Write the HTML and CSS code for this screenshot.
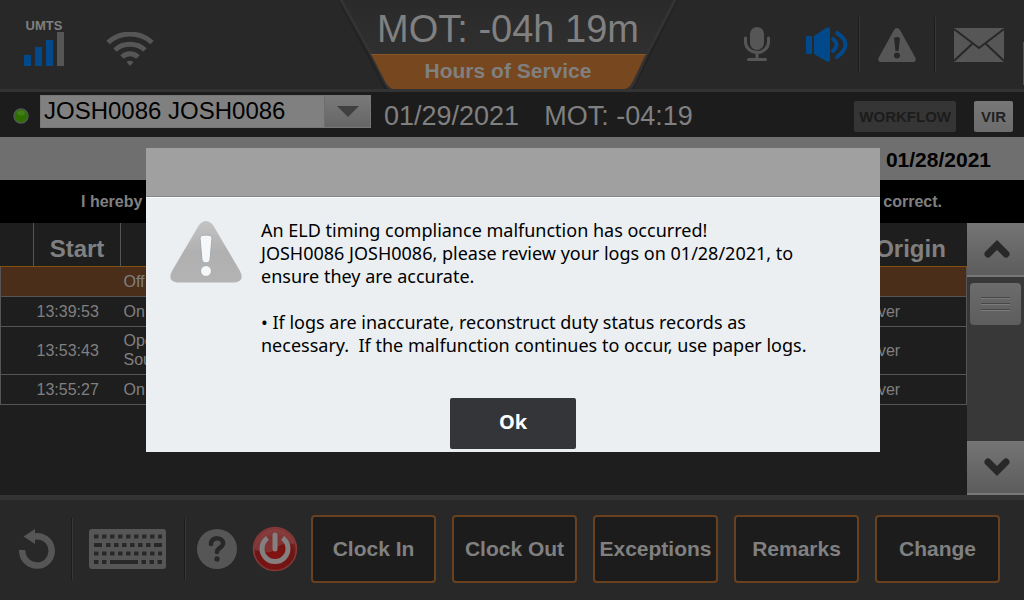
FILE: index.html
```html
<!DOCTYPE html>
<html lang="en">
<head>
<meta charset="utf-8">
<meta name="viewport" content="width=device-width, initial-scale=1">
<title>Hours of Service</title>
<link rel="stylesheet" href="styles.css">
</head>
<body>
<header class="topbar">
  <div class="status">
    <div class="signal">
      <span class="signal-label">UMTS</span>
      <svg width="40" height="34" viewBox="0 0 40 34" aria-hidden="true"><path fill="#01498a" d="M0 23h7v11H0zM11 15h7v19h-7zM22 8h7v26h-7z"/><path fill="#565656" d="M33 0h7v34h-7z"/></svg>
    </div>
    <svg class="wifi" width="48" height="34" viewBox="0 0 48 34" aria-hidden="true"><g fill="none" stroke="#565656" stroke-width="5"><path d="M2 10.500C14-.7 34-.7 46 10.500"/><path d="M9 18C17 10.300 31 10.300 39 18"/><path d="M16 25c4.500-4.500 11.500-4.500 16 0"/></g><path fill="#565656" d="M20.500 30q3.500-2.600 7 0L24 34z"/></svg>
  </div>
  <div class="clock">
    <svg class="clock-shape" width="340" height="90" viewBox="0 0 340 90" aria-hidden="true">
      <defs><linearGradient id="tab" x1="0" y1="0" x2="0" y2="1"><stop offset="0" stop-color="#2a2a2a"/><stop offset="1" stop-color="#333"/></linearGradient></defs>
      <path fill="#232323" d="M0 0h340l-44 89H46z"/>
      <path fill="url(#tab)" stroke="#333" stroke-width="3" d="M2-2 33 54 47 82Q50 89 56 89H288Q293 89 296 82L309 54 338-2z"/>
      <path fill="#77471f" d="M33 54H308L295 81Q291 89 286 89H56Q52 89 48 83z"/>
      <path fill="#8a5526" d="M33 54H308v1H33z"/>
    </svg>
    <div class="clock-time">MOT: -04h 19m</div>
    <div class="clock-name">Hours of Service</div>
  </div>
  <div class="tools">
    <button class="icon mic" aria-label="Microphone"><svg width="26" height="35" viewBox="0 0 26 35"><rect x="6" y="0" width="14" height="23" rx="7" fill="#565656"/><path d="M1.500 11v4a11.500 10.500 0 0 0 23 0v-4M13 25v7M4.500 32.500h17" fill="none" stroke="#565656" stroke-width="3" stroke-linecap="round"/></svg></button>
    <button class="icon" aria-label="Volume"><svg width="42" height="35" viewBox="0 0 42 35"><path fill="#01498a" d="M1 9h5v18H1Q0 27 0 26V10Q0 9 1 9zM8 9 20 1q4-2 4 1v31q0 3-4 1L8 27z"/><path d="M27 12q7 5.500 0 12M31 6q17 11 0 24" fill="none" stroke="#01498a" stroke-width="4" stroke-linecap="round"/></svg></button>
    <span class="rule"></span>
    <button class="icon alert" aria-label="Alerts"><svg width="38" height="34" viewBox="0 0 38 34"><path fill="#565656" d="M16 2q3-4 6 0l15.500 28q1 4-3 4h-31q-4 0-3-4z"/><path fill="#282828" d="M16 10q3-2 6 0l-1.500 13h-3z"/><circle cx="19" cy="27.500" r="3" fill="#282828"/></svg></button>
    <span class="rule"></span>
    <button class="icon mail" aria-label="Messages"><svg width="50" height="34" viewBox="0 0 50 34"><path fill="#565656" d="M0 0h50v34H0z"/><path d="M0 1 25 20 50 1M0 33 18 16M50 33 32 16" fill="none" stroke="#282828" stroke-width="2"/></svg></button>
  </div>
  <span class="edge-mark"></span>
</header>

<section class="driverbar">
  <svg class="led" width="16" height="16" viewBox="0 0 16 16" aria-hidden="true"><circle cx="8" cy="8" r="7" fill="#2f6f02" stroke="#505a4b" stroke-width="1.500"/><ellipse cx="8" cy="5" rx="4" ry="2.500" fill="#427d19"/></svg>
  <div class="picker">
    <select class="driver" aria-label="Driver"><option>JOSH0086 JOSH0086</option></select>
    <span class="picker-arrow"><svg width="22" height="12" viewBox="0 0 22 12"><path fill="#404040" d="M0 0h22L11 11z"/></svg></span>
  </div>
  <span class="bar-date">01/29/2021</span>
  <span class="bar-mot">MOT: -04:19</span>
  <div class="bar-actions">
    <button class="small-btn off" disabled>WORKFLOW</button>
    <button class="small-btn">VIR</button>
  </div>
</section>

<div class="log-date">01/28/2021</div>
<div class="certify"><span>I hereby certify that my data</span><span>true and correct.</span></div>

<main class="content">
  <div class="log">
    <table class="grid">
      <colgroup><col class="c-mark"><col class="c-start"><col><col class="c-origin"></colgroup>
      <thead><tr><th></th><th>Start</th><th></th><th>Origin</th></tr></thead>
      <tbody>
        <tr class="current"><td></td><td></td><td>Off Duty</td><td></td></tr>
        <tr><td></td><td>13:39:53</td><td>On Duty</td><td>Driver</td></tr>
        <tr><td></td><td>13:53:43</td><td>Operator<br>Source</td><td>Driver</td></tr>
        <tr><td></td><td>13:55:27</td><td>On Duty</td><td>Driver</td></tr>
      </tbody>
    </table>
  </div>
  <div class="scroller">
    <button class="scroll-btn" aria-label="Scroll up"><svg width="26" height="18" viewBox="0 0 26 18"><path d="M4 14 13 5l9 9" fill="none" stroke="#282828" stroke-width="7" stroke-linecap="round"/></svg></button>
    <div class="track"><div class="thumb"><i></i><i></i><i></i></div></div>
    <button class="scroll-btn" aria-label="Scroll down"><svg width="26" height="18" viewBox="0 0 26 18"><path d="M4 4l9 9 9-9" fill="none" stroke="#282828" stroke-width="7" stroke-linecap="round"/></svg></button>
  </div>
</main>

<footer class="footer">
  <div class="foot-tools">
    <button class="icon undo" aria-label="Back"><svg width="36" height="40" viewBox="0 0 36 40"><path d="M3.300 21A14.700 14.700 0 1 0 15 7.500" fill="none" stroke="#565656" stroke-width="6.500"/><path fill="#565656" d="M4.500 7.500 16 0v15z"/></svg></button>
    <span class="rule tall"></span>
    <button class="icon keys" aria-label="Keyboard"><svg width="77" height="40" viewBox="0 0 77 40"><rect width="77" height="40" rx="3" fill="#565656"/><g stroke="#282828" stroke-width="4" fill="none"><path d="M5 7.500h68M5 24.500h68" stroke-dasharray="4.500 3.500"/><path d="M5 16h8M17 16h4.500M25 16h4.500M33 16h4.500M41 16h4.500M49 16h4.500M57 16h4.500M65 16h8M5 33h4.500M13 33h4.500M21 33h28M52.500 33h4.500M60.500 33H65M68.500 33H73"/></g></svg></button>
    <span class="rule tall"></span>
    <button class="icon help" aria-label="Help"><svg width="40" height="40" viewBox="0 0 40 40"><circle cx="20" cy="20" r="20" fill="#565656"/><path d="M14 15c0-8 13-7 12 0-.5 4-6 4-6 8" fill="none" stroke="#282828" stroke-width="4.500" stroke-linecap="round"/><circle cx="20" cy="30" r="2.700" fill="#282828"/></svg></button>
    <button class="icon power" aria-label="Power"><svg width="46" height="46" viewBox="0 0 46 46"><defs><radialGradient id="red" cx=".5" cy=".65" r=".6"><stop offset="0" stop-color="#871212"/><stop offset=".7" stop-color="#6d1515"/><stop offset="1" stop-color="#823434"/></radialGradient></defs><circle cx="23" cy="23" r="21.500" fill="url(#red)" stroke="#843838" stroke-width="1.500"/><path fill="#8a4747" opacity=".6" d="M2 23A21 21 0 0 1 43 18Q30 16 23 23T2 23z"/><path d="M15.500 12a13 13 0 1 0 15 0" fill="none" stroke="#858080" stroke-width="5"/><path d="M23 9v14" stroke="#858080" stroke-width="5" stroke-linecap="round"/></svg></button>
  </div>
  <nav class="actions">
    <button class="action">Clock In</button>
    <button class="action">Clock Out</button>
    <button class="action">Exceptions</button>
    <button class="action">Remarks</button>
    <button class="action">Change</button>
  </nav>
</footer>

<div class="overlay">
  <div class="modal" role="alertdialog" aria-modal="true" aria-describedby="message">
    <div class="modal-head"></div>
    <div class="modal-body">
      <svg class="modal-icon" width="72" height="62" viewBox="0 0 72 62" aria-hidden="true"><defs><linearGradient id="warn" x1="0" y1="0" x2="0" y2="1"><stop offset="0" stop-color="#c4c4c4"/><stop offset=".5" stop-color="#b0b0b0"/><stop offset="1" stop-color="#b3b3b3"/></linearGradient></defs><path fill="url(#warn)" d="M29 4q7-8 14 0l27 46q5 10-5 11.500H7Q-3 60 2 50z"/><path fill="#f6f7f8" stroke="#a4aaae" d="M30 17q0-3 6-3t6 3l-2 22q-.5 3-4 3t-4-3z"/><circle cx="36" cy="50" r="5.500" fill="#f6f7f8" stroke="#a4aaae"/></svg>
      <div class="message" id="message">
        <p>An ELD timing compliance malfunction has occurred!<br>JOSH0086 JOSH0086, please review your logs on 01/28/2021, to<br>ensure they are accurate.</p>
        <p>• If logs are inaccurate, reconstruct duty status records as<br>necessary.&nbsp; If the malfunction continues to occur, use paper logs.</p>
      </div>
    </div>
    <button class="ok">Ok</button>
  </div>
</div>
</body>
</html>
```
FILE: styles.css
```css
* { box-sizing: border-box; }
body {
  margin: 0;
  min-height: 100vh;
  display: flex;
  flex-direction: column;
  background: #1e1e1e;
  color: #808080;
  font-family: "Liberation Sans", Arial, sans-serif;
}
button { font-family: inherit; margin: 0; }
svg { display: block; }
.icon { padding: 0; border: 0; background: none; }

.topbar {
  position: relative;
  display: grid;
  grid-template-columns: 1fr 340px 1fr;
  height: 92px;
  padding-right: 8px;
  background: #282828;
  border-bottom: 3px solid #333;
}
.status { display: flex; align-items: flex-start; gap: 42px; padding: 20px 0 0 24px; }
.signal-label { display: block; height: 12px; font-size: 13px; line-height: 12px; font-weight: bold; text-align: center; }
.wifi { margin-top: 12px; }
.clock { position: relative; text-align: center; white-space: nowrap; }
.clock-shape { position: absolute; left: 0; top: 0; }
.clock-time { position: relative; font-size: 38px; line-height: 54px; padding-top: 2px; }
.clock-name { position: relative; font-size: 21px; line-height: 30px; font-weight: bold; }
.tools { display: flex; justify-content: flex-end; align-items: center; gap: 18px; padding-right: 12px; }
.mic { margin-right: 18px; }
.rule { width: 2px; height: 55px; background: #1c1c1c; border-right: 1px solid #373737; }
.icon + .rule { margin-left: -8px; }
.alert + .rule { margin-left: 0; }
.edge-mark { position: absolute; right: 0; top: 42px; width: 1px; height: 43px; background: #77471f; }

.driverbar { display: flex; align-items: center; height: 45px; padding: 0 11px 0 13px; background: #1c1c1c; }
.led { margin-top: 2px; }
.picker { position: relative; width: 331px; height: 33px; margin: 0 13px 6px 11px; }
.driver {
  appearance: none;
  width: 100%;
  height: 33px;
  padding: 0 50px 2px 3px;
  border: 1px solid #777;
  border-radius: 0;
  background: #808080;
  color: #000;
  font-family: inherit;
  font-size: 24px;
  opacity: 1;
}
.picker-arrow {
  position: absolute;
  top: 1px;
  right: 1px;
  display: flex;
  align-items: center;
  justify-content: center;
  width: 46px;
  height: 31px;
  background: linear-gradient(#797979, #666);
  border-left: 1px solid #6e6e6e;
  pointer-events: none;
}
.bar-date, .bar-mot { font-size: 27px; line-height: 45px; padding-top: 4px; white-space: nowrap; }
.bar-mot { margin-left: 25px; }
.bar-actions { display: flex; gap: 18px; margin-left: auto; padding-top: 4px; }
.small-btn {
  height: 31px;
  padding: 0 7px;
  border: 0;
  border-radius: 2px;
  background: linear-gradient(#777, #6c6c6c);
  color: #222;
  font-size: 15px;
  font-weight: bold;
}
.small-btn.off { padding: 0 5px; background: #353535; color: #1c1c1c; }

.log-date { height: 43px; padding: 1px 33px 0 0; background: #6f6f6f; color: #000; font-size: 21px; line-height: 43px; font-weight: bold; text-align: right; }
.certify { display: flex; justify-content: space-between; padding: 0 82px 0 81px; background: #000; font-size: 16px; line-height: 43px; font-weight: bold; }

.content { flex: 1; display: flex; }
.log { flex: 1; }
.grid { width: 100%; table-layout: fixed; border-collapse: collapse; }
.c-mark { width: 33px; }
.c-start { width: 87px; }
.c-origin { width: 112px; }
.grid th { height: 43px; padding: 9px 0 0; font-size: 24px; line-height: 28px; }
.grid th:nth-child(2) { border-left: 1px solid #555; border-right: 1px solid #555; }
.grid td { height: 30px; padding: 0 3px; font-size: 16px; line-height: 19px; }
.grid tbody { border: 1px solid #555; }
.grid tbody tr { border-bottom: 1px solid #555; }
.grid tbody tr.current { background: #4a2e1a; border-top: 1px solid #854f10; }
.grid tr:nth-child(3) td { height: 48px; }

.scroller { width: 57px; display: flex; flex-direction: column; background: #383838; }
.scroll-btn {
  display: flex;
  align-items: center;
  justify-content: center;
  height: 54px;
  padding: 0 0 0 3px;
  border: 0;
  border-bottom: 2px solid #777;
  background: linear-gradient(#757575, #5c5c5c);
}
.track { flex: 1; padding: 6px 3px; }
.thumb { height: 42px; display: flex; flex-direction: column; justify-content: center; align-items: center; gap: 4px; border-radius: 4px; background: linear-gradient(#6c6c6c, #5d5d5d); }
.thumb i { width: 29px; height: 2px; background: #474747; border-bottom: 1px solid #7b7b7b; }

.footer { display: flex; align-items: center; height: 105px; padding: 0 24px 2px 0; background: #282828; border-top: 5px solid #333; }
.foot-tools { display: flex; align-items: center; width: 311px; padding-left: 19px; }
.rule.tall { height: 62px; }
.foot-tools .undo + .rule { margin-left: 16px; }
.foot-tools .keys { margin-left: 16px; }
.foot-tools .keys + .rule { margin-left: 18px; }
.foot-tools .help { margin-left: 11px; }
.foot-tools .power { margin-left: 15px; }
.actions { flex: 1; display: grid; grid-template-columns: repeat(5, 1fr); gap: 16px; }
.action { height: 68px; padding: 0; border: 2px solid #69411f; border-radius: 4px; background: #1c1c1c; color: #808080; font-size: 21px; font-weight: bold; }

.overlay { position: fixed; inset: 0; display: flex; align-items: center; justify-content: center; padding-left: 2px; }
.modal { width: 734px; max-width: 100%; padding-bottom: 3px; background: #ebeff2; color: #000; }
.modal-head { height: 49px; background: #a0a0a0; border-bottom: 1px solid #888; }
.modal-body { display: flex; gap: 19px; padding: 21px 24px 23px; border-top: 1px solid #fff; }
.modal-icon { flex: none; margin-top: 2px; }
.message { font-family: "Noto Sans", sans-serif; font-size: 18px; line-height: 23px; white-space: nowrap; }
.message p { margin: 0 0 23px; }
.ok {
  display: block;
  width: 126px;
  height: 51px;
  margin: -5px auto 0;
  padding: 0 0 4px;
  border: 0;
  border-radius: 2px;
  background: #343539;
  color: #fff;
  font-family: "Noto Sans", sans-serif;
  font-size: 20px;
  font-weight: bold;
}
```
